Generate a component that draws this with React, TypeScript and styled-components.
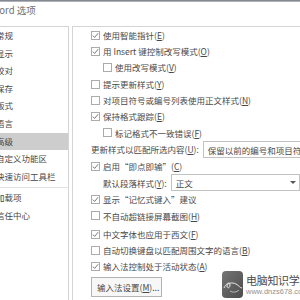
import React from 'react';
import styled, {createGlobalStyle} from 'styled-components';

const GlobalStyle = createGlobalStyle`
  html, body {
    margin: 0;
    padding: 0;
    background: #fff;
  }
  body {
    font-family: "Noto Sans CJK SC", "Noto Sans", sans-serif;
  }
`;

const Screen = styled.div`
  position: relative;
  width: 300px;
  height: 300px;
  overflow: hidden;
  background: #fff;
`;

const TopEdge = styled.div`
  height: 2px;
  background: linear-gradient(to bottom, #6f757e, #c3c6ca);
`;

const Dialog = styled.div`
  margin-left: -12px;
  width: 360px;
`;

const Title = styled.div`
  height: 24px;
  line-height: 17px;
  padding-left: 3px;
  font-size: 9.5px;
  color: #707070;
`;

const Body = styled.div`
  display: flex;
  gap: 3px;
  height: 290px;
`;

const Nav = styled.div`
  width: 81px;
  flex: none;
  box-sizing: border-box;
  border-top: 1px solid #d4d4d4;
  border-right: 1px solid #d4d4d4;
`;

const NavItem = styled.div<{$active?: boolean}>`
  height: 17.6px;
  line-height: 17.6px;
  padding-left: 8px;
  font-size: 8.5px;
  color: #484848;
  white-space: nowrap;
  background: ${({$active}) => ($active ? '#cdcdcd' : 'transparent')};
`;

const NavSeparator = styled.div`
  height: 1px;
  margin: 1.5px 0 1.5px;
  background: #e2e2e2;
`;

const Content = styled.div`
  flex: 1;
  box-sizing: border-box;
  border-top: 1px solid #d4d4d4;
  border-left: 1px solid #d4d4d4;
  padding-left: 18px;
`;

const Row = styled.div<{$indent?: boolean; $tall?: boolean; $gap?: boolean}>`
  display: flex;
  align-items: center;
  gap: 3px;
  height: ${({$tall}) => ($tall ? '17px' : '16.3px')};
  margin-top: ${({$gap}) => ($gap ? '2px' : '0')};
  padding-left: ${({$indent}) => ($indent ? '12px' : '0')};
  font-size: 8.5px;
  color: #484848;
  white-space: nowrap;
`;

const Box = styled.span`
  width: 9px;
  height: 9px;
  flex: none;
  box-sizing: border-box;
  border: 1px solid #ababab;
  background: #fff;
  display: flex;
  align-items: center;
  justify-content: center;
`;

const Label = styled.span`
  line-height: 1;
`;

const Select = styled.div<{$width: number}>`
  width: ${({$width}) => $width}px;
  height: 17px;
  margin-left: 1px;
  box-sizing: border-box;
  border: 1px solid #c2c2c2;
  background: #fff;
  display: flex;
  align-items: center;
  justify-content: space-between;
  padding: 0 3px 0 4px;
  flex: none;
`;

const Arrow = styled.span`
  width: 0;
  height: 0;
  border-left: 3px solid transparent;
  border-right: 3px solid transparent;
  border-top: 3px solid #555;
`;

const Button = styled.div`
  margin-top: 2px;
  width: 71px;
  height: 20px;
  box-sizing: border-box;
  border: 1px solid #b3b3b3;
  background: #f7f7f7;
  font-size: 8.5px;
  color: #484848;
  line-height: 18px;
  padding-left: 5px;
  white-space: nowrap;
`;

const Watermark = styled.div`
  position: absolute;
  left: 222px;
  top: 271px;
  display: flex;
  gap: 3px;
  opacity: 0.92;
`;

const WatermarkText = styled.div`
  display: flex;
  flex-direction: column;
  padding-top: 3px;
`;

const Brand = styled.div`
  font-size: 11px;
  line-height: 13px;
  color: #3a3a3a;
  letter-spacing: -0.3px;
  white-space: nowrap;
`;

const Site = styled.div`
  font-family: "Liberation Sans", Arial, sans-serif;
  font-size: 7.5px;
  line-height: 9px;
  color: #8a8a8a;
  white-space: nowrap;
`;

const Check = () => (
  <svg width="7" height="7" viewBox="0 0 7 7">
    <path d="M0.8 3.6 L2.6 5.4 L6.2 1.2" fill="none" stroke="#666" strokeWidth="0.9" />
  </svg>
);

const Logo = () => (
  <svg width="21" height="27" viewBox="0 0 21 27">
    <defs>
      <linearGradient id="lg" x1="0" y1="0" x2="1" y2="1">
        <stop offset="0" stopColor="#6a6a6a" />
        <stop offset="1" stopColor="#3e3e3e" />
      </linearGradient>
    </defs>
    <rect x="0" y="0" width="21" height="27" rx="4" fill="url(#lg)" />
    <path
      d="M2 17 C5 11, 8 11, 8 14 C8 17, 5 18, 5 15 C5 12, 10 11, 14 13 C17 14.5, 18 17, 20 17"
      fill="none"
      stroke="#e8e8e8"
      strokeWidth="1"
    />
    <path d="M8 20 C11 22, 15 21, 17 19" fill="none" stroke="#cfcfcf" strokeWidth="0.8" />
  </svg>
);

type OptionProps = {
  checked?: boolean;
  text: string;
  hotkey?: string;
  indent?: boolean;
  gap?: boolean;
};

const Option = ({checked, text, hotkey, indent, gap}: OptionProps) => (
  <Row $indent={indent} $gap={gap}>
    <Box>{checked && <Check />}</Box>
    <Label>
      {text}
      {hotkey && (
        <>
          (<u>{hotkey}</u>)
        </>
      )}
    </Label>
  </Row>
);

const navItems = [
  '常规',
  '显示',
  '校对',
  '保存',
  '版式',
  '语言',
  '高级',
  '自定义功能区',
  '快速访问工具栏',
];

export default function App() {
  return (
    <Screen>
      <GlobalStyle />
      <TopEdge />
      <Dialog>
        <Title>Word 选项</Title>
        <Body>
          <Nav>
            {navItems.map((n) => (
              <NavItem key={n} $active={n === '高级'}>
                {n}
              </NavItem>
            ))}
            <NavSeparator />
            <NavItem>加载项</NavItem>
            <NavItem>信任中心</NavItem>
          </Nav>
          <Content>
            <Option checked text="使用智能指针" hotkey="E" />
            <Option checked text="用 Insert 键控制改写模式" hotkey="O" />
            <Option indent text="使用改写模式" hotkey="V" />
            <Option text="提示更新样式" hotkey="Y" />
            <Option text="对项目符号或编号列表使用正文样式" hotkey="N" />
            <Option checked text="保持格式跟踪" hotkey="E" />
            <Option indent text="标记格式不一致错误" hotkey="F" />
            <Row $tall>
              <Label>
                更新样式以匹配所选内容(<u>U</u>):
              </Label>
              <Select $width={150}>保留以前的编号和项目符号样式</Select>
            </Row>
            <Option checked text="启用“即点即输”" hotkey="C" />
            <Row $tall $indent>
              <Label>
                默认段落样式(<u>Y</u>):
              </Label>
              <Select $width={129}>
                正文
                <Arrow />
              </Select>
            </Row>
            <Option checked text="显示“记忆式键入”建议" />
            <Option text="不自动超链接屏幕截图" hotkey="H" />
            <Option gap checked text="中文字体也应用于西文" hotkey="F" />
            <Option text="自动切换键盘以匹配周围文字的语言" hotkey="B" />
            <Option checked text="输入法控制处于活动状态" hotkey="A" />
            <Button>
              输入法设置(<u>M</u>)...
            </Button>
          </Content>
        </Body>
      </Dialog>
      <Watermark>
        <Logo />
        <WatermarkText>
          <Brand>电脑知识学习网</Brand>
          <Site>www.dnzs678.com</Site>
        </WatermarkText>
      </Watermark>
    </Screen>
  );
}
